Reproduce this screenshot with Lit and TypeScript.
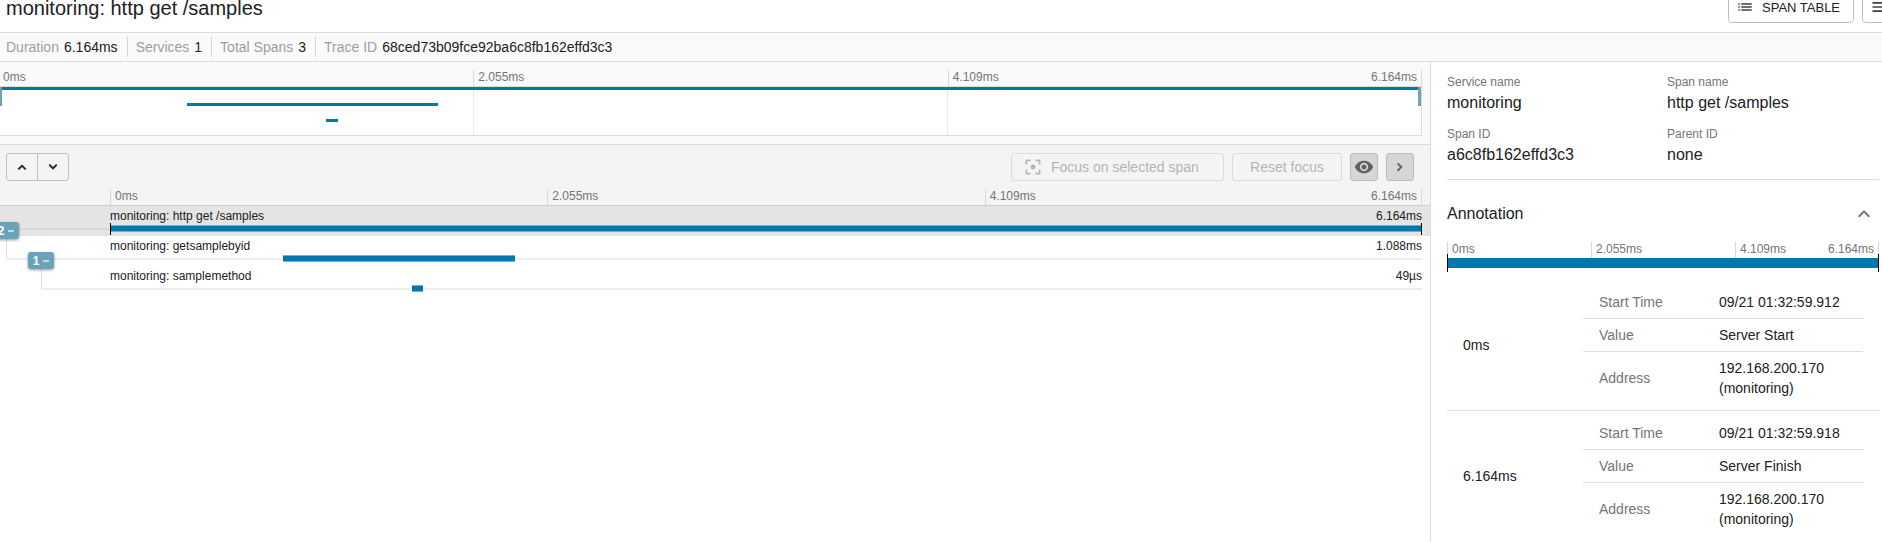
import { LitElement, html, css, svg } from "lit";
import { customElement } from "lit/decorators.js";

const TICKS = ["0ms", "2.055ms", "4.109ms", "6.164ms"];

interface Span {
  name: string;
  duration: string;
  start: number;
  width: number;
  children: number;
  depth: number;
}

const SPANS: Span[] = [
  { name: "monitoring: http get /samples", duration: "6.164ms", start: 0, width: 100, children: 2, depth: 0 },
  { name: "monitoring: getsamplebyid", duration: "1.088ms", start: 13.2, width: 17.7, children: 1, depth: 1 },
  { name: "monitoring: samplemethod", duration: "49µs", start: 23, width: 0.85, children: 0, depth: 2 },
];

const ANNOTATIONS = [
  { at: "0ms", time: "09/21 01:32:59.912", value: "Server Start" },
  { at: "6.164ms", time: "09/21 01:32:59.918", value: "Server Finish" },
];

const icon = (size: number, d: string) => html`
  <svg width=${size} height=${size} viewBox="0 0 24 24" fill="currentColor" aria-hidden="true">
    ${svg`<path d=${d}></path>`}
  </svg>
`;

const UP = "M7.41 15.41 12 10.83l4.59 4.58L18 14l-6-6-6 6z";
const UP_BOLD = "M12 7.5 19.5 15l-2.3 2.3L12 12.1l-5.2 5.2L4.5 15z";
const DOWN_BOLD = "M12 16.5 4.5 9l2.3-2.3L12 11.9l5.2-5.2L19.5 9z";
const RIGHT_BOLD = "M16.5 12 9 19.5l-2.3-2.3 5.2-5.2-5.2-5.2L9 4.5z";
const LIST =
  "M3 13h2v-2H3v2zm0 4h2v-2H3v2zm0-8h2V7H3v2zm4 4h14v-2H7v2zm0 4h14v-2H7v2zM7 7v2h14V7H7z";
const MENU = "M3 18h18v-2H3v2zm0-5h18v-2H3v2zm0-7v2h18V6H3z";
const FOCUS =
  "M5 15H3v4c0 1.1.9 2 2 2h4v-2H5v-4zM5 5h4V3H5c-1.1 0-2 .9-2 2v4h2V5zm14-2h-4v2h4v4h2V5c0-1.1-.9-2-2-2zm0 16h-4v2h4c1.1 0 2-.9 2-2v-4h-2v4zM12 9c-1.66 0-3 1.34-3 3s1.34 3 3 3 3-1.34 3-3-1.34-3-3-3z";
const EYE =
  "M12 4.5C7 4.5 2.73 7.61 1 12c1.73 4.39 6 7.5 11 7.5s9.27-3.11 11-7.5c-1.73-4.39-6-7.5-11-7.5zM12 17c-2.76 0-5-2.24-5-5s2.24-5 5-5 5 2.24 5 5-2.24 5-5 5zm0-8c-1.66 0-3 1.34-3 3s1.34 3 3 3 3-1.34 3-3-1.34-3-3-3z";

@customElement("time-axis")
export class TimeAxis extends LitElement {
  static styles = css`
    :host {
      display: block;
    }
    .axis {
      display: grid;
      grid-template-columns: repeat(3, 1fr);
      height: 16px;
      font-size: 12px;
      line-height: 14px;
      color: #757575;
    }
    .cell {
      display: flex;
      justify-content: space-between;
      border-left: 1px solid #d8d8d8;
      padding-left: 4px;
    }
    .cell:last-child {
      border-right: 1px solid #d8d8d8;
      padding-right: 4px;
    }
    :host([flush]) .cell:first-child {
      border-left: none;
    }
  `;

  render() {
    return html`
      <div class="axis">
        <div class="cell"><span>${TICKS[0]}</span></div>
        <div class="cell"><span>${TICKS[1]}</span></div>
        <div class="cell"><span>${TICKS[2]}</span><span>${TICKS[3]}</span></div>
      </div>
    `;
  }
}

@customElement("trace-minimap")
export class TraceMinimap extends LitElement {
  static styles = css`
    :host {
      display: block;
      padding: 8px 8px 8px 0;
      background: #fafafa;
      border-bottom: 1px solid #dcdcdc;
    }
    .wrap {
      margin-left: -1px;
    }
    .map {
      position: relative;
      display: grid;
      grid-template-columns: repeat(3, 1fr);
      height: 48px;
      background: #fff;
      border: 1px solid #dcdcdc;
      border-left: none;
    }
    .third + .third {
      border-left: 1px solid #e8e8e8;
    }
    .bars {
      position: absolute;
      inset: 0;
      display: flex;
      flex-direction: column;
      gap: 13px;
    }
    .bar {
      height: 3px;
      background: #0077ae;
    }
    .handle {
      position: absolute;
      top: 0;
      width: 3px;
      height: 19px;
      background: #6ba2b9;
    }
    .start {
      left: 0;
    }
    .end {
      right: 0;
    }
  `;

  render() {
    return html`
      <div class="wrap">
        <time-axis flush></time-axis>
        <div class="map">
          <div class="third"></div>
          <div class="third"></div>
          <div class="third"></div>
          <div class="bars">
            ${SPANS.map(
              (s) => html`<div class="bar" style="margin-left:${s.start}%;width:${s.width}%"></div>`
            )}
          </div>
          <div class="handle start"></div>
          <div class="handle end"></div>
        </div>
      </div>
    `;
  }
}

@customElement("trace-timeline")
export class TraceTimeline extends LitElement {
  static styles = css`
    :host {
      display: block;
    }
    button {
      font: inherit;
      margin: 0;
      padding: 0;
      display: flex;
      align-items: center;
      justify-content: center;
      height: 28px;
      box-sizing: border-box;
      border: 1px solid #c0c0c0;
      border-radius: 3px;
      background: transparent;
      color: #212121;
    }
    svg {
      flex: none;
    }
    .head {
      background: #f4f4f4;
      border-bottom: 1px solid #d0d0d0;
      padding-top: 8px;
    }
    .tools {
      display: flex;
      gap: 8px;
      padding: 0 16px 8px 6px;
    }
    .pair {
      display: flex;
      margin-right: auto;
    }
    .pair button {
      width: 32px;
    }
    .pair button:first-child {
      border-radius: 3px 0 0 3px;
    }
    .pair button:last-child {
      border-radius: 0 3px 3px 0;
      margin-left: -1px;
    }
    .tools .text {
      border-color: #dadada;
      color: #b4b4b4;
      font-size: 14px;
      gap: 8px;
    }
    .tools .focus {
      width: 213px;
      padding-left: 11px;
      justify-content: flex-start;
    }
    .reset {
      width: 110px;
    }
    .tools .square {
      width: 28px;
      border-color: #bdbdbd;
      background: #d6d6d6;
      color: #616161;
    }
    .scale {
      margin: 0 8px 0 110px;
    }
    .row {
      position: relative;
      height: 30px;
      padding: 0 8px 0 110px;
      font-size: 12px;
      color: #212121;
    }
    .selected {
      background: #e4e4e4;
    }
    .label {
      display: flex;
      justify-content: space-between;
      line-height: 21px;
    }
    .guide {
      position: absolute;
      top: 22px;
      right: 8px;
      height: 2px;
      background: #eee;
    }
    .selected .guide {
      background: #d8d8d8;
    }
    .track {
      position: absolute;
      top: 19px;
      left: 110px;
      right: 8px;
    }
    .bar {
      height: 5px;
      background: #0077ae;
      border: 1px solid #6fb2d0;
      border-width: 1px 0;
    }
    .edge {
      position: absolute;
      top: -2px;
      width: 1px;
      height: 12px;
      background: #000;
    }
    .edge.l {
      left: 0;
    }
    .edge.r {
      right: 0;
    }
    .stem {
      position: absolute;
      top: 24px;
      width: 1px;
      height: 30px;
      background: #dcdcdc;
    }
    .row .badge {
      position: absolute;
      z-index: 1;
      top: 16px;
      width: 26px;
      height: 17px;
      gap: 4px;
      border: none;
      border-radius: 3px;
      background: #6ba2b9;
      color: #fff;
      font-size: 12px;
      font-weight: 700;
      box-shadow: 0 1px 3px rgba(0, 0, 0, 0.4);
    }
    .dash {
      width: 6px;
      height: 2px;
      background: #c4dae3;
    }
  `;

  private row(s: Span, i: number) {
    const x = s.depth * 35 - 29;
    return html`
      <div class="row ${i === 0 ? "selected" : ""}">
        <div class="label"><span>${s.name}</span><span>${s.duration}</span></div>
        <div class="guide" style="left:${Math.max(0, x)}px"></div>
        <div class="track">
          <div class="bar" style="margin-left:${s.start}%;width:${s.width}%"></div>
          ${i === 0 ? html`<div class="edge l"></div><div class="edge r"></div>` : ""}
        </div>
        ${s.children
          ? html`
              <div class="stem" style="left:${x + 35}px"></div>
              <button class="badge" style="left:${x + 22}px" aria-label="Collapse ${s.children} spans">
                ${s.children}<span class="dash"></span>
              </button>
            `
          : ""}
      </div>
    `;
  }

  render() {
    return html`
      <div class="head">
        <div class="tools">
          <div class="pair">
            <button aria-label="Previous span">${icon(14, UP_BOLD)}</button>
            <button aria-label="Next span">${icon(14, DOWN_BOLD)}</button>
          </div>
          <button class="text focus" disabled>${icon(20, FOCUS)}Focus on selected span</button>
          <button class="text reset" disabled>Reset focus</button>
          <button class="square" aria-label="Toggle minimap">${icon(20, EYE)}</button>
          <button class="square" aria-label="Toggle details">${icon(14, RIGHT_BOLD)}</button>
        </div>
        <time-axis class="scale"></time-axis>
      </div>
      ${SPANS.map((s, i) => this.row(s, i))}
    `;
  }
}

@customElement("span-detail")
export class SpanDetail extends LitElement {
  static styles = css`
    :host {
      display: block;
      box-sizing: border-box;
      padding: 11px 3px 0 16px;
      color: #212121;
    }
    .facts {
      display: grid;
      grid-template-columns: 220px 1fr;
      row-gap: 10px;
      margin: 0;
      padding-bottom: 12px;
      border-bottom: 1px solid #dedede;
    }
    dt {
      font-size: 12px;
      line-height: 18px;
      color: #757575;
    }
    dd {
      margin: 0;
      font-size: 16px;
      line-height: 24px;
    }
    .title {
      display: flex;
      justify-content: space-between;
      align-items: center;
      padding: 22px 3px 16px 0;
    }
    h2 {
      margin: 0;
      font-size: 16px;
      line-height: 24px;
      font-weight: 400;
    }
    .toggle {
      border: none;
      background: none;
      padding: 0;
      display: flex;
      color: #757575;
    }
    .bar {
      position: relative;
      height: 10px;
      background: #0077ae;
      margin-bottom: 12px;
    }
    .edge {
      position: absolute;
      top: -4px;
      width: 1px;
      height: 18px;
      background: #000;
    }
    .l {
      left: 0;
    }
    .r {
      right: 0;
    }
    .item {
      display: grid;
      grid-template-columns: 120px 1fr;
      align-items: center;
      padding: 6px 16px;
      font-size: 14px;
      line-height: 20px;
    }
    .item + .item {
      border-top: 1px solid #dedede;
    }
    table {
      width: 100%;
      border-collapse: separate;
      border-spacing: 0;
      table-layout: fixed;
    }
    th,
    td {
      padding: 6px 16px;
      text-align: left;
      font-weight: 400;
      border-bottom: 1px solid #dedede;
    }
    th {
      width: 88px;
      color: #757575;
    }
    td {
      padding-right: 0;
    }
    tr:last-child > * {
      border-bottom: none;
    }
  `;

  render() {
    return html`
      <dl class="facts">
        <div><dt>Service name</dt><dd>monitoring</dd></div>
        <div><dt>Span name</dt><dd>http get /samples</dd></div>
        <div><dt>Span ID</dt><dd>a6c8fb162effd3c3</dd></div>
        <div><dt>Parent ID</dt><dd>none</dd></div>
      </dl>
      <div class="title">
        <h2>Annotation</h2>
        <button class="toggle" aria-label="Collapse annotation">${icon(24, UP)}</button>
      </div>
      <time-axis></time-axis>
      <div class="bar"><div class="edge l"></div><div class="edge r"></div></div>
      ${ANNOTATIONS.map(
        (a) => html`
          <div class="item">
            <span>${a.at}</span>
            <table>
              <tr><th scope="row">Start Time</th><td>${a.time}</td></tr>
              <tr><th scope="row">Value</th><td>${a.value}</td></tr>
              <tr><th scope="row">Address</th><td>192.168.200.170<br />(monitoring)</td></tr>
            </table>
          </div>
        `
      )}
    `;
  }
}

@customElement("app-root")
export class AppRoot extends LitElement {
  static styles = css`
    :host {
      display: flex;
      flex-direction: column;
      min-height: 100vh;
      overflow: hidden;
      background: #fff;
      color: #212121;
      font-family: "Liberation Sans", Arial, sans-serif;
    }
    .top {
      display: flex;
      justify-content: space-between;
      align-items: flex-end;
      height: 32px;
      padding-left: 6px;
      border-bottom: 1px solid #dcdcdc;
    }
    h1 {
      margin: 0;
      padding-bottom: 12px;
      font-size: 20px;
      line-height: 24px;
      font-weight: 400;
    }
    .actions {
      display: flex;
      align-items: flex-end;
      gap: 8px;
      margin-right: -24px;
      padding-bottom: 9px;
    }
    .action {
      display: flex;
      align-items: center;
      gap: 8px;
      box-sizing: border-box;
      height: 32px;
      padding: 0 7px;
      font: inherit;
      font-size: 13px;
      color: #212121;
      background: #fff;
      border: 1px solid #c0c0c0;
      border-radius: 4px;
    }
    .table {
      width: 126px;
      white-space: nowrap;
    }
    .menu {
      width: 44px;
    }
    svg {
      flex: none;
      color: #424242;
    }
    .summary {
      display: flex;
      align-items: center;
      height: 28px;
      margin: 0;
      padding-left: 6px;
      background: #fafafa;
      border-bottom: 1px solid #dcdcdc;
      font-size: 14px;
      line-height: 20px;
    }
    .fact {
      display: flex;
      gap: 5px;
      padding-right: 9px;
    }
    .fact + .fact {
      border-left: 1px solid #d4d4d4;
      padding-left: 8px;
    }
    dt {
      color: #9e9e9e;
    }
    dd {
      margin: 0;
    }
    .body {
      flex: 1;
      display: grid;
      grid-template-columns: minmax(0, 1fr) 452px;
    }
    .detail {
      border-left: 1px solid #dcdcdc;
    }
  `;

  render() {
    const facts = [
      ["Duration", "6.164ms"],
      ["Services", "1"],
      ["Total Spans", "3"],
      ["Trace ID", "68ced73b09fce92ba6c8fb162effd3c3"],
    ];
    return html`
      <header class="top">
        <h1>monitoring: http get /samples</h1>
        <div class="actions">
          <button class="action table">${icon(18, LIST)}SPAN TABLE</button>
          <button class="action menu" aria-label="Menu">${icon(20, MENU)}</button>
        </div>
      </header>
      <dl class="summary">
        ${facts.map(([k, v]) => html`<div class="fact"><dt>${k}</dt><dd>${v}</dd></div>`)}
      </dl>
      <div class="body">
        <main>
          <trace-minimap></trace-minimap>
          <trace-timeline></trace-timeline>
        </main>
        <span-detail class="detail"></span-detail>
      </div>
    `;
  }
}
